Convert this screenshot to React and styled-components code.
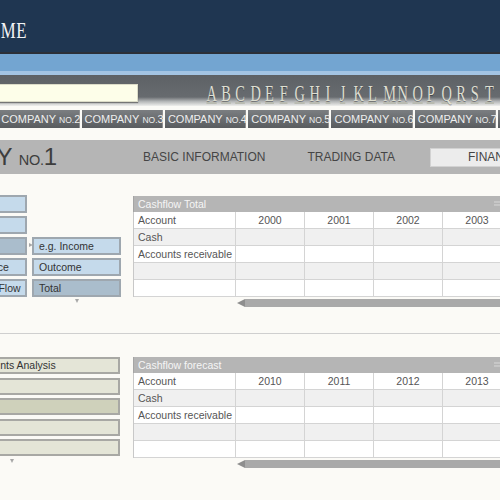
import styled, { createGlobalStyle } from 'styled-components'

const GlobalStyle = createGlobalStyle`
  *, *::before, *::after { box-sizing: border-box; }
  html, body { margin: 0; padding: 0; }
  body {
    background: #fbfaf6;
    font-family: "Liberation Sans", Arial, sans-serif;
    overflow: hidden;
  }
`

const Page = styled.div`
  width: 500px;
  height: 500px;
  overflow: hidden;
  background: #fbfaf6;
`

const Header = styled.div`
  height: 54px;
  padding-top: 18px;
  background: #1f3651;
  border-bottom: 2px solid #2b3038;
  white-space: nowrap;
`

const SiteName = styled.span`
  display: inline-block;
  margin-left: -25px;
  font-family: "Liberation Serif", "Times New Roman", serif;
  font-size: 24px;
  line-height: 24px;
  letter-spacing: 1px;
  color: #f1f3f5;
  transform: scaleX(0.7);
  transform-origin: left center;
`

const Band = styled.div`
  height: 22px;
  background: linear-gradient(to bottom, #73a5d1 0, #73a5d1 17px, #a3c4e3 17px, #a3c4e3 21px, #5d6165 21px);
`

const Toolbar = styled.div`
  height: 30px;
  display: flex;
  align-items: flex-start;
  padding-top: 8px;
  overflow: hidden;
  background: linear-gradient(to bottom, #5e6266 0%, #676b6f 70%, #b5b7b8 85%, #efefed 100%);
`

const Search = styled.div`
  flex-shrink: 0;
  width: 148px;
  height: 18px;
  margin-left: -10px;
  background: #fdfee9;
  border: 1px solid #dcdcc8;
  box-shadow: 0 1px 1px rgba(40, 40, 40, 0.5);
`

const Alphabet = styled.div`
  display: flex;
  flex-shrink: 0;
  margin-left: 65px;
`

const Letter = styled.span`
  width: 14.7px;
  flex-shrink: 0;
  text-align: center;
`

const Glyph = styled.span`
  display: inline-block;
  font-family: "Liberation Serif", "Times New Roman", serif;
  font-size: 24px;
  line-height: 18px;
  color: #dedfd2;
  border-bottom: 2px solid #b9bbb1;
  text-shadow: 0 1px 0 rgba(0, 0, 0, 0.35);
  transform: scaleX(0.6);
`

const TabRow = styled.div`
  display: flex;
  gap: 2px;
  margin-top: 4px;
  margin-left: -85px;
  height: 18px;
`

const Tab = styled.div`
  flex-shrink: 0;
  width: 81.3px;
  height: 18px;
  padding-left: 3px;
  line-height: 18px;
  font-size: 11px;
  color: #eeeeee;
  white-space: nowrap;
  background: linear-gradient(to bottom, #7b7e81, #595c5f);
  border-right: 1px solid #8e9092;
`

const TabNo = styled.span`
  font-size: 8.5px;
  margin-left: 3px;
`

const TitleBar = styled.div`
  margin-top: 12px;
  height: 34px;
  display: flex;
  align-items: center;
  background: #b5b5b5;
  overflow: hidden;
  white-space: nowrap;
`

const Title = styled.div`
  flex-shrink: 0;
  width: 159px;
  margin-left: -107px;
  font-size: 24px;
  color: #3d3d3d;
`

const TitleNo = styled.span`
  font-size: 14.5px;
  letter-spacing: -0.3px;
`

const NavItem = styled.div`
  flex-shrink: 0;
  margin-left: ${p => p.$offset}px;
  font-size: 12px;
  color: #454545;
`

const ActiveNav = styled.div`
  flex-shrink: 0;
  margin-left: 35px;
  width: 150px;
  height: 19px;
  padding-left: 37px;
  line-height: 17px;
  font-size: 12px;
  color: #454545;
  background: #ececec;
  border: 1px solid #d2d2d2;
`

const Section = styled.div`
  display: flex;
  align-items: flex-start;
  margin-left: -36px;
  margin-top: ${p => p.$top}px;
`

const LeftGrid = styled.div`
  position: relative;
  flex-shrink: 0;
  width: 161px;
  display: grid;
  grid-template-columns: 63px 89px;
  grid-template-rows: repeat(5, 18px);
  gap: 3px 5px;
`

const LeftStack = styled.div`
  position: relative;
  flex-shrink: 0;
  width: 161px;
  display: flex;
  flex-direction: column;
  gap: 3.5px;
  padding-right: 5px;
`

const Box = styled.div`
  grid-column: ${p => p.$col || 1};
  grid-row: ${p => p.$row || 'auto'};
  height: ${p => p.$h || 18}px;
  padding-left: 5px;
  border: 2px solid ${p => p.$border};
  background: ${p => p.$bg};
  font-size: 10.5px;
  line-height: ${p => (p.$h || 18) - 4}px;
  color: #333;
  white-space: nowrap;
  overflow: hidden;
`

const Marker = styled.span`
  position: absolute;
  left: ${p => p.$left}px;
  top: ${p => p.$top}px;
  width: 0;
  height: 0;
  border-style: solid;
  border-color: transparent;
  ${p => p.$dir === 'right'
    ? 'border-width: 2.5px 0 2.5px 4px; border-left-color: #a8a8a8;'
    : 'border-width: 4px 2.5px 0 2.5px; border-top-color: #a8a8a8;'}
`

const Table = styled.div`
  flex-shrink: 0;
  width: 400px;
  margin-left: 8px;
  margin-top: ${p => p.$top || 0}px;
`

const TableHead = styled.div`
  position: relative;
  height: 16px;
  padding-left: 4px;
  line-height: 16px;
  font-size: 10.5px;
  color: #f6f6f6;
  background: #b5b5b5;
  border-left: 1px solid #a5a5a5;
`

const HeadIcon = styled.svg`
  position: absolute;
  left: 360px;
  top: 5px;
`

const Grid = styled.div`
  display: grid;
  grid-template-columns: 102px repeat(5, 69px);
  border-left: 1px solid #c8c8c8;
`

const Cell = styled.div`
  height: 17px;
  padding-left: ${p => (p.$center ? 0 : 4)}px;
  text-align: ${p => (p.$center ? 'center' : 'left')};
  line-height: 17px;
  font-size: 10.5px;
  color: #555;
  white-space: nowrap;
  background: ${p => (p.$shade ? '#f0f0f0' : '#ffffff')};
  border-right: 1px solid #d4d4d4;
  border-bottom: 1px solid #d4d4d4;
`

const Scroll = styled.div`
  display: flex;
  align-items: center;
  height: 8px;
  margin-top: 2px;
  margin-left: 104px;
`

const ScrollArrow = styled.span`
  width: 0;
  height: 0;
  border-style: solid;
  border-width: 4px 8px 4px 0;
  border-color: transparent #8e8e8e transparent transparent;
`

const ScrollBar = styled.div`
  flex: 1;
  height: 8px;
  background: #a9a9a9;
`

const Divider = styled.div`
  height: 1px;
  margin-top: 26px;
  background: #cfcfcf;
`

const letters = 'ABCDEFGHIJKLMNOPQRSTUVWXYZ'.split('')
const companies = [1, 2, 3, 4, 5, 6, 7, 8]
const rows = ['Cash', 'Accounts receivable', '', '']

const DataTable = ({ title, years, top }) => (
  <Table $top={top}>
    <TableHead>
      {title}
      <HeadIcon width="8" height="6" viewBox="0 0 8 6">
        <path d="M0 1h8M0 4h8" stroke="#d8d8d8" strokeWidth="1" />
      </HeadIcon>
    </TableHead>
    <Grid>
      <Cell>Account</Cell>
      {years.map(y => <Cell key={y} $center>{y}</Cell>)}
      <Cell $center />
      {rows.map((r, i) => (
        [<Cell key={'a' + i} $shade={i % 2 === 0}>{r}</Cell>,
          ...[0, 1, 2, 3, 4].map(c => <Cell key={i + '-' + c} $shade={i % 2 === 0} />)]
      ))}
    </Grid>
    <Scroll>
      <ScrollArrow />
      <ScrollBar />
    </Scroll>
  </Table>
)

const blue = { bg: '#c5daeb', dark: '#aabdcc', border: '#9ea7af' }
const sand = { bg: '#e4e5d7', dark: '#cfd1bb', border: '#a8a8a4' }

const App = () => {
  return (
    <Page>
      <GlobalStyle />
      <Header>
        <SiteName>HOME</SiteName>
      </Header>
      <Band />
      <Toolbar>
        <Search />
        <Alphabet>
          {letters.map(l => (
            <Letter key={l}><Glyph>{l}</Glyph></Letter>
          ))}
        </Alphabet>
      </Toolbar>
      <TabRow>
        {companies.map(n => (
          <Tab key={n}>COMPANY<TabNo>NO.</TabNo>{n}</Tab>
        ))}
      </TabRow>
      <TitleBar>
        <Title>COMPANY <TitleNo>NO.</TitleNo>1</Title>
        <NavItem $offset={91}>BASIC INFORMATION</NavItem>
        <NavItem $offset={42}>TRADING DATA</NavItem>
        <ActiveNav>FINANCIAL DATA</ActiveNav>
      </TitleBar>

      <Section $top={21}>
        <LeftGrid>
          <Box $row={1} $bg={blue.bg} $border={blue.border} />
          <Box $row={2} $bg={blue.bg} $border={blue.border} />
          <Box $row={3} $bg={blue.dark} $border={blue.border} />
          <Box $row={4} $bg={blue.bg} $border={blue.border}>Balance</Box>
          <Box $row={5} $bg={blue.bg} $border={blue.border}>Cash Flow</Box>
          <Box $col={2} $row={3} $bg={blue.bg} $border={blue.border}>e.g. Income</Box>
          <Box $col={2} $row={4} $bg={blue.bg} $border={blue.border}>Outcome</Box>
          <Box $col={2} $row={5} $bg={blue.dark} $border={blue.border}>Total</Box>
          <Marker $dir="right" $left={65} $top={48} />
          <Marker $dir="down" $left={111} $top={104} />
        </LeftGrid>
        <DataTable title="Cashflow Total" years={[2000, 2001, 2002, 2003]} top={1} />
      </Section>

      <Divider />

      <Section $top={23}>
        <LeftStack>
          <Box $h={17} $bg={sand.bg} $border={sand.border}>Accounts Analysis</Box>
          <Box $h={17} $bg={sand.bg} $border={sand.border} />
          <Box $h={17} $bg={sand.dark} $border={sand.border} />
          <Box $h={17} $bg={sand.bg} $border={sand.border} />
          <Box $h={17} $bg={sand.bg} $border={sand.border} />
          <Marker $dir="down" $left={46} $top={102} />
        </LeftStack>
        <DataTable title="Cashflow forecast" years={[2010, 2011, 2012, 2013]} />
      </Section>
    </Page>
  )
}

export default App
